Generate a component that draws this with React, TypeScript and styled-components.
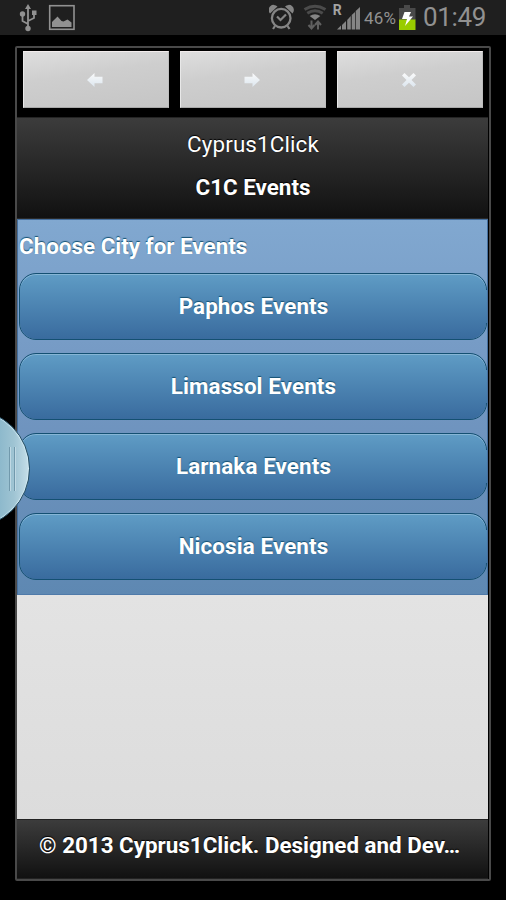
import React from "react";
import styled, { createGlobalStyle } from "styled-components";

const Global = createGlobalStyle`
  *, *::before, *::after { box-sizing: border-box; }
  html, body { margin: 0; background: #000; }
  body { font-family: Roboto, "Liberation Sans", sans-serif; overflow: hidden; }
`;

const Screen = styled.div`
  position: relative;
  width: 506px;
  height: 900px;
  background: #000;
  overflow: hidden;
`;

const StatusBar = styled.header`
  height: 35px;
  background: #1f1f1f;
  display: flex;
  justify-content: space-between;
  color: #919191;
  svg { display: block; flex: none; }
`;

const StatusGroup = styled.div`
  display: flex;
`;

const Battery = styled.span`
  width: 34px;
  margin-left: 3px;
  font-size: 17px;
  line-height: 36px;
  letter-spacing: 0.2px;
  white-space: nowrap;
`;

const Clock = styled.span`
  width: 90px;
  padding-left: 7px;
  font-size: 26px;
  line-height: 34px;
  letter-spacing: -0.35px;
  white-space: nowrap;
`;

const Frame = styled.main`
  width: 476px;
  height: 835px;
  margin: 11px 0 0 15px;
  border: 2px solid #494949;
  border-radius: 2px;
  display: flex;
  flex-direction: column;
  padding-right: 1px;
`;

const Toolbar = styled.nav`
  height: 69px;
  padding: 3px 5px 0 6px;
  display: flex;
  gap: 11px;
`;

const ToolButton = styled.button`
  width: 146px;
  height: 57px;
  padding: 0 2px 0 0;
  border: 1px solid;
  border-color: #f2ecec #bdbdbd #a8a8a8 #e8e8e8;
  background: linear-gradient(172deg, #dedede 0%, #cecece 40%, #c5c5c5 100%);
  display: grid;
  place-items: center;
`;

const Header = styled.header`
  height: 102px;
  border-top: 1px solid #242424;
  border-bottom: 1px solid #292929;
  background: linear-gradient(#3c3c3c, #111);
  display: flex;
  flex-direction: column;
  align-items: center;
  padding: 10px 0 0 1px;
  color: #fff;
  text-shadow: 0 -1px 1px #000;
`;

const Title = styled.h1<{ $bold?: boolean; $spacing: number }>`
  margin: 0;
  font-size: 22.4px;
  line-height: 32px;
  height: 43px;
  font-weight: ${(p) => (p.$bold ? 700 : 400)};
  letter-spacing: ${(p) => p.$spacing}px;
  white-space: nowrap;
`;

const Panel = styled.section`
  height: 376px;
  border: 1px solid #456f9e;
  border-bottom-color: #4f7aa9;
  background: linear-gradient(#81a8d0, #7296c1 48%, #5e88b2);
  padding: 10px 0 0 1px;
`;

const PanelTitle = styled.h2`
  margin: 0 0 11px;
  font-size: 22.4px;
  line-height: 32px;
  color: #fff;
  text-shadow: 0 -1px 1px #145072;
  white-space: nowrap;
`;

const CityList = styled.div`
  display: flex;
  flex-direction: column;
  gap: 13px;
`;

const CityButton = styled.button`
  position: relative;
  width: 468px;
  height: 67px;
  padding: 0 0 2px 1px;
  border: 1px solid #145072;
  border-radius: 17px;
  background: linear-gradient(#5f9cc5, #396b9e) padding-box;
  box-shadow: inset 0 1px 0 #86b6d6;
  color: #fff;
  font: 700 22.4px Roboto, "Liberation Sans", sans-serif;
  letter-spacing: 0.1px;
  text-shadow: 0 -1px 1px #145072;

  &::after {
    content: "";
    position: absolute;
    right: -1px;
    top: 16px;
    width: 1px;
    height: 33px;
    background: linear-gradient(#558fbb, #4277a8);
  }
`;

const Blank = styled.div`
  flex: 1;
  background: linear-gradient(#e3e3e3, #dcdcdc);
`;

const Footer = styled.footer`
  height: 60px;
  border-top: 1px solid #222;
  border-bottom: 1px solid #222;
  background: linear-gradient(#3c3c3c, #111);
  color: #fff;
  text-shadow: 0 -1px 1px #000;
  font-size: 22.4px;
  font-weight: 700;
  line-height: 32px;
  padding: 9px 0 0 22px;
  white-space: nowrap;
`;

const EdgeHandle = styled.div`
  position: absolute;
  left: -89px;
  top: 409px;
  width: 119px;
  height: 119px;
  border-radius: 50%;
  border: 1px solid #244c61;
  background: linear-gradient(90deg, #8db9cc 75%, #9fc4d3 87%, #c6dfe9);
  box-shadow: inset -1px 0 1px #d5edf6;

  &::after {
    content: "";
    position: absolute;
    left: 97px;
    top: 37px;
    width: 6px;
    height: 44px;
    border: solid #7199ac;
    border-width: 0 1px;
    box-shadow: 1px 0 #c0d9e4, inset 1px 0 #c0d9e4;
  }
`;

const cities = ["Paphos Events", "Limassol Events", "Larnaka Events", "Nicosia Events"];

const LeftIcons = () => (
  <svg width="90" height="35" fill="none" stroke="#919191">
    <path d="M28 9v19M28 24l-5.500-3v-6M28 21l6-3v-5" strokeWidth="1.800" />
    <path d="M28 4l3 5h-6zM32 10.500h4.500v4.500h-4.500z" fill="#919191" stroke="none" />
    <circle cx="22.500" cy="14" r="2.700" fill="#919191" stroke="none" />
    <circle cx="28" cy="28.500" r="2.700" fill="#919191" stroke="none" />
    <rect x="49.700" y="5.700" width="24.300" height="23.600" strokeWidth="1.600" />
    <path d="M52 27v-5l2-2 3.500-3.500 4 4.500 2 .5 4-2 4 3v4.500z" fill="#919191" stroke="none" />
  </svg>
);

const SignalIcons = () => (
  <svg width="92" height="35" viewBox="269 0 92 35" fill="none" stroke="#858585">
    <circle cx="281.200" cy="18.200" r="9.300" strokeWidth="2.300" />
    <path d="M277 16.500l3.500 3.500 5.500-5.500M275 26l-2 3M287.500 26l2 3" strokeWidth="2.200" />
    <path d="M270 13.500a5 5 0 0 1 7.500-7zM285 6.500a5 5 0 0 1 7.500 7z" fill="#858585" stroke="none" />
    <g stroke="#4b4b4b" strokeWidth="3">
      <path d="M304.500 9.500q10.500-6.500 21 0M307.300 13.300q7.700-5 15.400 0" />
      <path d="M309.700 16q5.300-3.300 10.600 0l-5.300 4z" fill="#858585" stroke="none" />
    </g>
    <path d="M311.500 20.500v7M308.500 25l3 3.500 3-3.500M318 29.500v-7M315 25l3-3.500 3 3.500" stroke="#606060" strokeWidth="2" />
    <text x="332.700" y="15.300" fill="#a3a3a3" stroke="none" fontSize="14" fontWeight="700" fontFamily="Roboto, sans-serif">R</text>
    <path d="M337 29.500l4-4v4zM342 25l4-4v8.500h-4zM347.200 20l3.600-4v13.500h-3.600zM351.700 15l3.300-3v17.500h-3.300zM355.700 11l4.300-4v22.500h-4.300z" fill="#858585" stroke="none" />
  </svg>
);

const BatteryIcon = () => (
  <svg width="18" height="35" viewBox="398 0 18 35">
    <path d="M404 5h6v3h5.500v12H399V8h5z" fill="#494949" />
    <path d="M399 19.500h16.500V30H399z" fill="#99cc00" />
    <path d="M404.500 12h6.500l-2 4.500h4l-8 9.500 2-7h-5z" fill="#fff" />
  </svg>
);

const toolPaths = {
  Back: "M1 8l7.500-7v3.700h8v6.600h-8V15z",
  Forward: "M17 8L9.500 1v3.700h-8v6.600h8V15z",
  Close: "M4.500 1l4.500 4.300L13.500 1 16 3.500 11.500 8l4.500 4.500-2.500 2.500L9 10.700 4.500 15 2 12.500 6.500 8 2 3.500z",
};

const ToolIcon = ({ name }: { name: keyof typeof toolPaths }) => (
  <svg width="18" height="16" viewBox="0 0 18 16">
    <defs>
      <linearGradient id={`tool-${name}`} x2="0" y2="1">
        <stop stopColor="#fafafa" />
        <stop offset="1" stopColor="#dce6ef" />
      </linearGradient>
    </defs>
    <path d={toolPaths[name]} fill={`url(#tool-${name})`} />
  </svg>
);

export default function App() {
  return (
    <Screen>
      <Global />
      <StatusBar>
        <LeftIcons />
        <StatusGroup>
          <SignalIcons />
          <Battery>46%</Battery>
          <BatteryIcon />
          <Clock>01:49</Clock>
        </StatusGroup>
      </StatusBar>
      <Frame>
        <Toolbar>
          {(["Back", "Forward", "Close"] as const).map((name) => (
            <ToolButton key={name} aria-label={name}>
              <ToolIcon name={name} />
            </ToolButton>
          ))}
        </Toolbar>
        <Header>
          <Title $spacing={0.12}>Cyprus1Click</Title>
          <Title $bold $spacing={0}>C1C Events</Title>
        </Header>
        <Panel>
          <PanelTitle>Choose City for Events</PanelTitle>
          <CityList>
            {cities.map((name) => (
              <CityButton key={name}>{name}</CityButton>
            ))}
          </CityList>
        </Panel>
        <Blank />
        <Footer>© 2013 Cyprus1Click. Designed and Dev…</Footer>
      </Frame>
      <EdgeHandle />
    </Screen>
  );
}
